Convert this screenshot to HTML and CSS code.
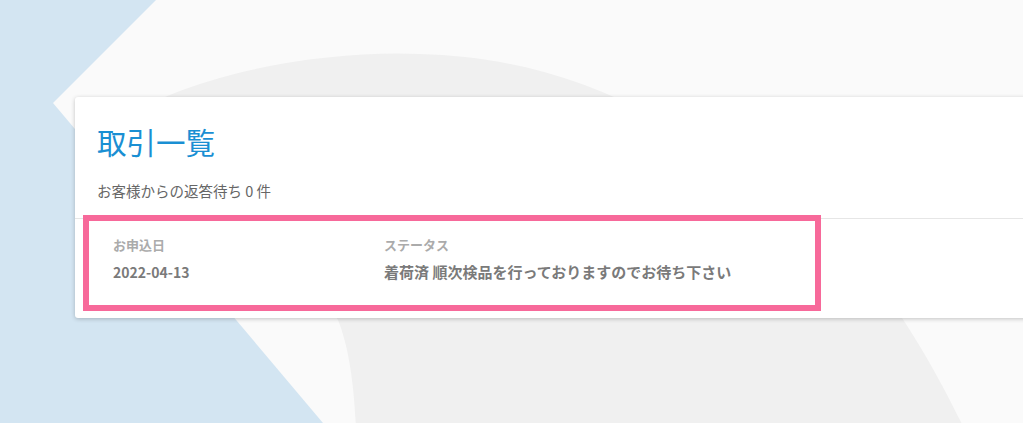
FILE: index.html
```html
<!DOCTYPE html>
<html lang="ja">
<head>
<meta charset="utf-8">
<title>取引一覧</title>
<link rel="stylesheet" href="styles.css">
</head>
<body>
<svg class="backdrop" width="1023" height="423" viewBox="0 0 1023 423" aria-hidden="true">
  <rect x="0" y="0" width="1023" height="423" fill="#d3e5f2"/>
  <polygon points="156,0 1023,0 1023,423 323,423 53,103" fill="#fafafa"/>
  <path d="M120,120 C200,70 330,50 420,54 C500,56 580,75 660,120 L880,285 C925,350 945,390 965,430 L356,430 C354,380 348,345 338,320 L300,250 Z" fill="#f0f0f0"/>
</svg>
<main class="card">
  <h1 class="title">取引一覧</h1>
  <p class="subtitle">お客様からの返答待ち 0 件</p>
  <div class="row">
    <div class="col col-date">
      <div class="label">お申込日</div>
      <div class="value value-date">2022-04-13</div>
    </div>
    <div class="col col-status">
      <div class="label">ステータス</div>
      <div class="value">着荷済 順次検品を行っておりますのでお待ち下さい</div>
    </div>
  </div>
  <div class="highlight"></div>
</main>
</body>
</html>
```
FILE: styles.css
```css
html, body {
  margin: 0;
  padding: 0;
  width: 1023px;
  height: 423px;
  overflow: hidden;
}
body {
  position: relative;
  font-family: "Noto Sans CJK JP", "Noto Sans", sans-serif;
  background: #fafafa;
}
.backdrop {
  position: absolute;
  left: 0;
  top: 0;
  z-index: 0;
}
.card {
  position: relative;
  z-index: 1;
  margin: 97px 0 0 75px;
  width: 980px;
  background: #ffffff;
  border-radius: 3px;
  box-shadow: 0 1px 4px rgba(0, 0, 0, 0.22);
  padding-top: 24px;
}
.title {
  margin: 0 0 20px 22px;
  font-size: 29.5px;
  line-height: 40px;
  font-weight: 400;
  color: #1a8fd3;
}
.subtitle {
  margin: 0 0 17px 22px;
  font-size: 14.5px;
  line-height: 20px;
  color: #666666;
}
.row {
  display: flex;
  border-top: 1px solid #e6e6e6;
  padding: 17px 0 35px 38px;
}
.col-date {
  width: 271px;
}
.label {
  font-size: 13px;
  line-height: 18px;
  font-weight: 700;
  color: #ababab;
}
.value {
  margin-top: 7px;
  font-size: 15px;
  line-height: 22px;
  font-weight: 700;
  color: #7a7a7a;
}
.value-date {
  font-size: 14px;
}
.highlight {
  position: absolute;
  left: 8px;
  top: 118px;
  width: 738px;
  height: 96px;
  box-sizing: border-box;
  border: 6px solid #f7699a;
}
```
